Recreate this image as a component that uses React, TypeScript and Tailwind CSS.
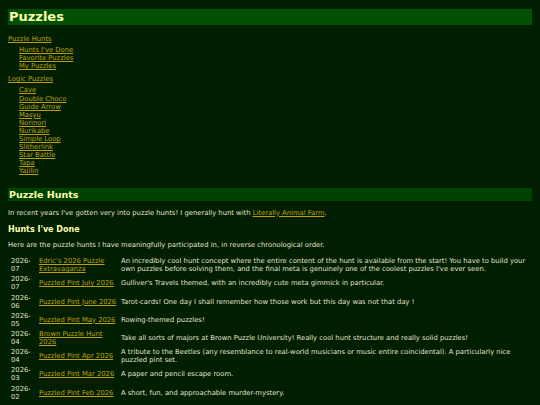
import React from "react";

const hunts: { date: [string, string]; name: string; desc: string }[] = [
  {
    date: ["2026-", "07"],
    name: "Edric's 2026 Puzzle Extravaganza",
    desc: "An incredibly cool hunt concept where the entire content of the hunt is available from the start! You have to build your own puzzles before solving them, and the final meta is genuinely one of the coolest puzzles I've ever seen.",
  },
  {
    date: ["2026-", "07"],
    name: "Puzzled Pint July 2026",
    desc: "Gulliver's Travels themed, with an incredibly cute meta gimmick in particular.",
  },
  {
    date: ["2026-", "06"],
    name: "Puzzled Pint June 2026",
    desc: "Tarot-cards! One day I shall remember how those work but this day was not that day !",
  },
  { date: ["2026-", "05"], name: "Puzzled Pint May 2026", desc: "Rowing-themed puzzles!" },
  {
    date: ["2026-", "04"],
    name: "Brown Puzzle Hunt 2026",
    desc: "Take all sorts of majors at Brown Puzzle University! Really cool hunt structure and really solid puzzles!",
  },
  {
    date: ["2026-", "04"],
    name: "Puzzled Pint Apr 2026",
    desc: "A tribute to the Beetles (any resemblance to real-world musicians or music entire coincidental). A particularly nice puzzled pint set.",
  },
  { date: ["2026-", "03"], name: "Puzzled Pint Mar 2026", desc: "A paper and pencil escape room." },
  { date: ["2026-", "02"], name: "Puzzled Pint Feb 2026", desc: "A short, fun, and approachable murder-mystery." },
];

const huntLinks = ["Hunts I've Done", "Favorite Puzzles", "My Puzzles"];
const logicLinks = [
  "Cave",
  "Double Choco",
  "Guide Arrow",
  "Masyu",
  "Norinori",
  "Nurikabe",
  "Simple Loop",
  "Slitherlink",
  "Star Battle",
  "Tapa",
  "Yajilin",
];

function A({ children }: { children: React.ReactNode }) {
  return <a className="text-[#c0a010] underline">{children}</a>;
}

export default function App() {
  return (
    <div className="min-h-[405px] bg-[#001f00] text-[#e0e0cc] text-[6.8px] leading-[8.1px] font-['DejaVu_Sans',sans-serif] px-2 pt-[9px] pb-4">
      <h1 className="bg-[#005200] text-[#ffffb0] font-bold text-[13px] leading-[16px] px-[1px]">Puzzles</h1>

      {/* nav */}
      <div className="mt-[10px]">
        <A>Puzzle Hunts</A>
        <ul className="mt-[3px] pl-[11px]">
          {huntLinks.map((l) => (
            <li key={l}>
              <A>{l}</A>
            </li>
          ))}
        </ul>
        <div className="mt-[5px]">
          <A>Logic Puzzles</A>
        </div>
        <ul className="mt-[3px] pl-[11px]">
          {logicLinks.map((l) => (
            <li key={l}>
              <A>{l}</A>
            </li>
          ))}
        </ul>
      </div>

      <h2 className="mt-[12px] bg-[#004200] text-[#ffffb0] font-bold text-[9.5px] leading-[13px] px-[1px]">
        Puzzle Hunts
      </h2>
      <p className="mt-[8px]">
        In recent years I've gotten very into puzzle hunts! I generally hunt with <A>Literally Animal Farm</A>.
      </p>
      <h3 className="mt-[8px] text-[#ffffb0] font-bold text-[8px] leading-[9.5px]">Hunts I've Done</h3>
      <p className="mt-[7px]">Here are the puzzle hunts I have meaningfully participated in, in reverse chronological order.</p>

      <table className="mt-[6px] border-separate border-spacing-[2px]">
        <tbody>
          {hunts.map((h, i) => (
            <tr key={i}>
              <td className="align-middle px-[1px] py-0 w-[26px]">
                {h.date[0]}
                <br />
                {h.date[1]}
              </td>
              <td className="align-middle px-[1px] py-0 w-[80px]">
                <A>{h.name}</A>
              </td>
              <td className="align-middle px-[1px] py-0">{h.desc}</td>
            </tr>
          ))}
        </tbody>
      </table>
    </div>
  );
}
